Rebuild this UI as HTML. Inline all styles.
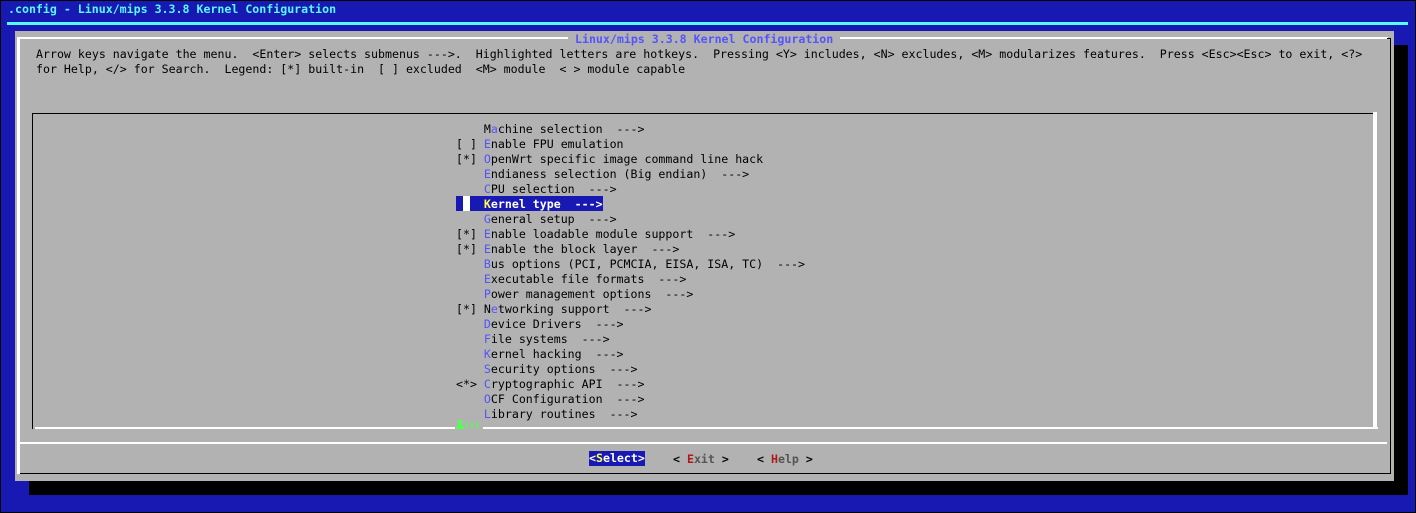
<!DOCTYPE html>
<html><head><style>
body{margin:0;width:1416px;height:513px;background:#000;position:relative;overflow:hidden;font-family:"DejaVu Sans Mono","Liberation Mono",monospace;font-size:11.6px;}
div{position:absolute;}
.t{white-space:pre;line-height:15px;color:#000;}
.h{color:#5454fc;}
</style></head><body>
<div style="left:1px;top:1px;width:1414px;height:511px;background:#1818b2"></div>
<div class="t" style="left:8px;top:2px;color:#54fcfc;font-weight:bold">.config - Linux/mips 3.3.8 Kernel Configuration</div>
<div style="left:7px;top:22px;width:1401px;height:3px;background:#54fcfc"></div>
<div style="left:29px;top:45px;width:1379px;height:450px;background:#000"></div>
<div style="left:15px;top:31px;width:1379px;height:450px;background:#b2b2b2"></div>
<div style="left:17px;top:37px;width:1371px;height:2px;background:#fff"></div>
<div style="left:17px;top:37px;width:3px;height:437px;background:#fff"></div>
<div style="left:20px;top:473px;width:1371px;height:1px;background:#000"></div>
<div style="left:1390px;top:38px;width:1px;height:436px;background:#000"></div>
<div style="left:1387px;top:38px;width:4px;height:1px;background:#000"></div>
<div style="left:20px;top:442px;width:1367px;height:2px;background:#fff"></div>
<div class="t" style="left:568px;top:32px;color:#5454fc;font-weight:bold"><span style="background:#b2b2b2"> Linux/mips 3.3.8 Kernel Configuration </span></div>
<div class="t" style="left:36px;top:47px">Arrow keys navigate the menu.  &lt;Enter&gt; selects submenus ---&gt;.  Highlighted letters are hotkeys.  Pressing &lt;Y&gt; includes, &lt;N&gt; excludes, &lt;M&gt; modularizes features.  Press &lt;Esc&gt;&lt;Esc&gt; to exit, &lt;?&gt;
for Help, &lt;/&gt; for Search.  Legend: [*] built-in  [ ] excluded  &lt;M&gt; module  &lt; &gt; module capable</div>
<div style="left:32px;top:113px;width:1341px;height:1px;background:#000"></div>
<div style="left:32px;top:113px;width:1px;height:316px;background:#000"></div>
<div style="left:35px;top:427px;width:1343px;height:2px;background:#fff"></div>
<div style="left:1373px;top:112px;width:4px;height:317px;background:#fff"></div>
<div style="left:456px;top:196px;width:147px;height:15px;background:#1818b2"></div>
<div style="left:463px;top:196px;width:7px;height:15px;background:#fff"></div>
<div class="t" style="left:456px;top:122px">    M<span class="h">a</span>chine selection  ---&gt;
[ ] <span class="h">E</span>nable FPU emulation
[*] <span class="h">O</span>penWrt specific image command line hack
    <span class="h">E</span>ndianess selection (Big endian)  ---&gt;
    <span class="h">C</span>PU selection  ---&gt;
    <b style="color:#fcfc54">K</b><b style="color:#fff">ernel type  ---&gt;</b>
    <span class="h">G</span>eneral setup  ---&gt;
[*] <span class="h">E</span>nable loadable module support  ---&gt;
[*] <span class="h">E</span>nable the block layer  ---&gt;
    <span class="h">B</span>us options (PCI, PCMCIA, EISA, ISA, TC)  ---&gt;
    <span class="h">E</span>xecutable file formats  ---&gt;
    <span class="h">P</span>ower management options  ---&gt;
[*] N<span class="h">e</span>tworking support  ---&gt;
    <span class="h">D</span>evice Drivers  ---&gt;
    <span class="h">F</span>ile systems  ---&gt;
    <span class="h">K</span>ernel hacking  ---&gt;
    <span class="h">S</span>ecurity options  ---&gt;
&lt;*&gt; <span class="h">C</span>ryptographic API  ---&gt;
    <span class="h">O</span>CF Configuration  ---&gt;
    <span class="h">L</span>ibrary routines  ---&gt;</div>
<div style="left:455px;top:425px;width:28px;height:6px;background:#b2b2b2"></div>
<div style="left:456px;top:420px;width:8px;height:9px;background:#54fc54;clip-path:polygon(25% 0,75% 0,75% 70%,100% 70%,100% 100%,0 100%,0 70%,25% 70%)"></div>
<div class="t" style="left:464px;top:420px;color:#54fc54;font-weight:bold;font-size:9px;line-height:12px">(+)</div>
<div class="t" style="left:589px;top:451px;background:#1818b2;color:#fff;font-weight:bold">&lt;<span style="color:#fcfc54">S</span>elect&gt;</div>
<div class="t" style="left:673px;top:452px;font-weight:bold;color:#000">&lt; <span style="color:#b21818">E</span><span style="color:#545454">xit</span> &gt;</div>
<div class="t" style="left:757px;top:452px;font-weight:bold;color:#000">&lt; <span style="color:#b21818">H</span><span style="color:#545454">elp</span> &gt;</div>
</body></html>
